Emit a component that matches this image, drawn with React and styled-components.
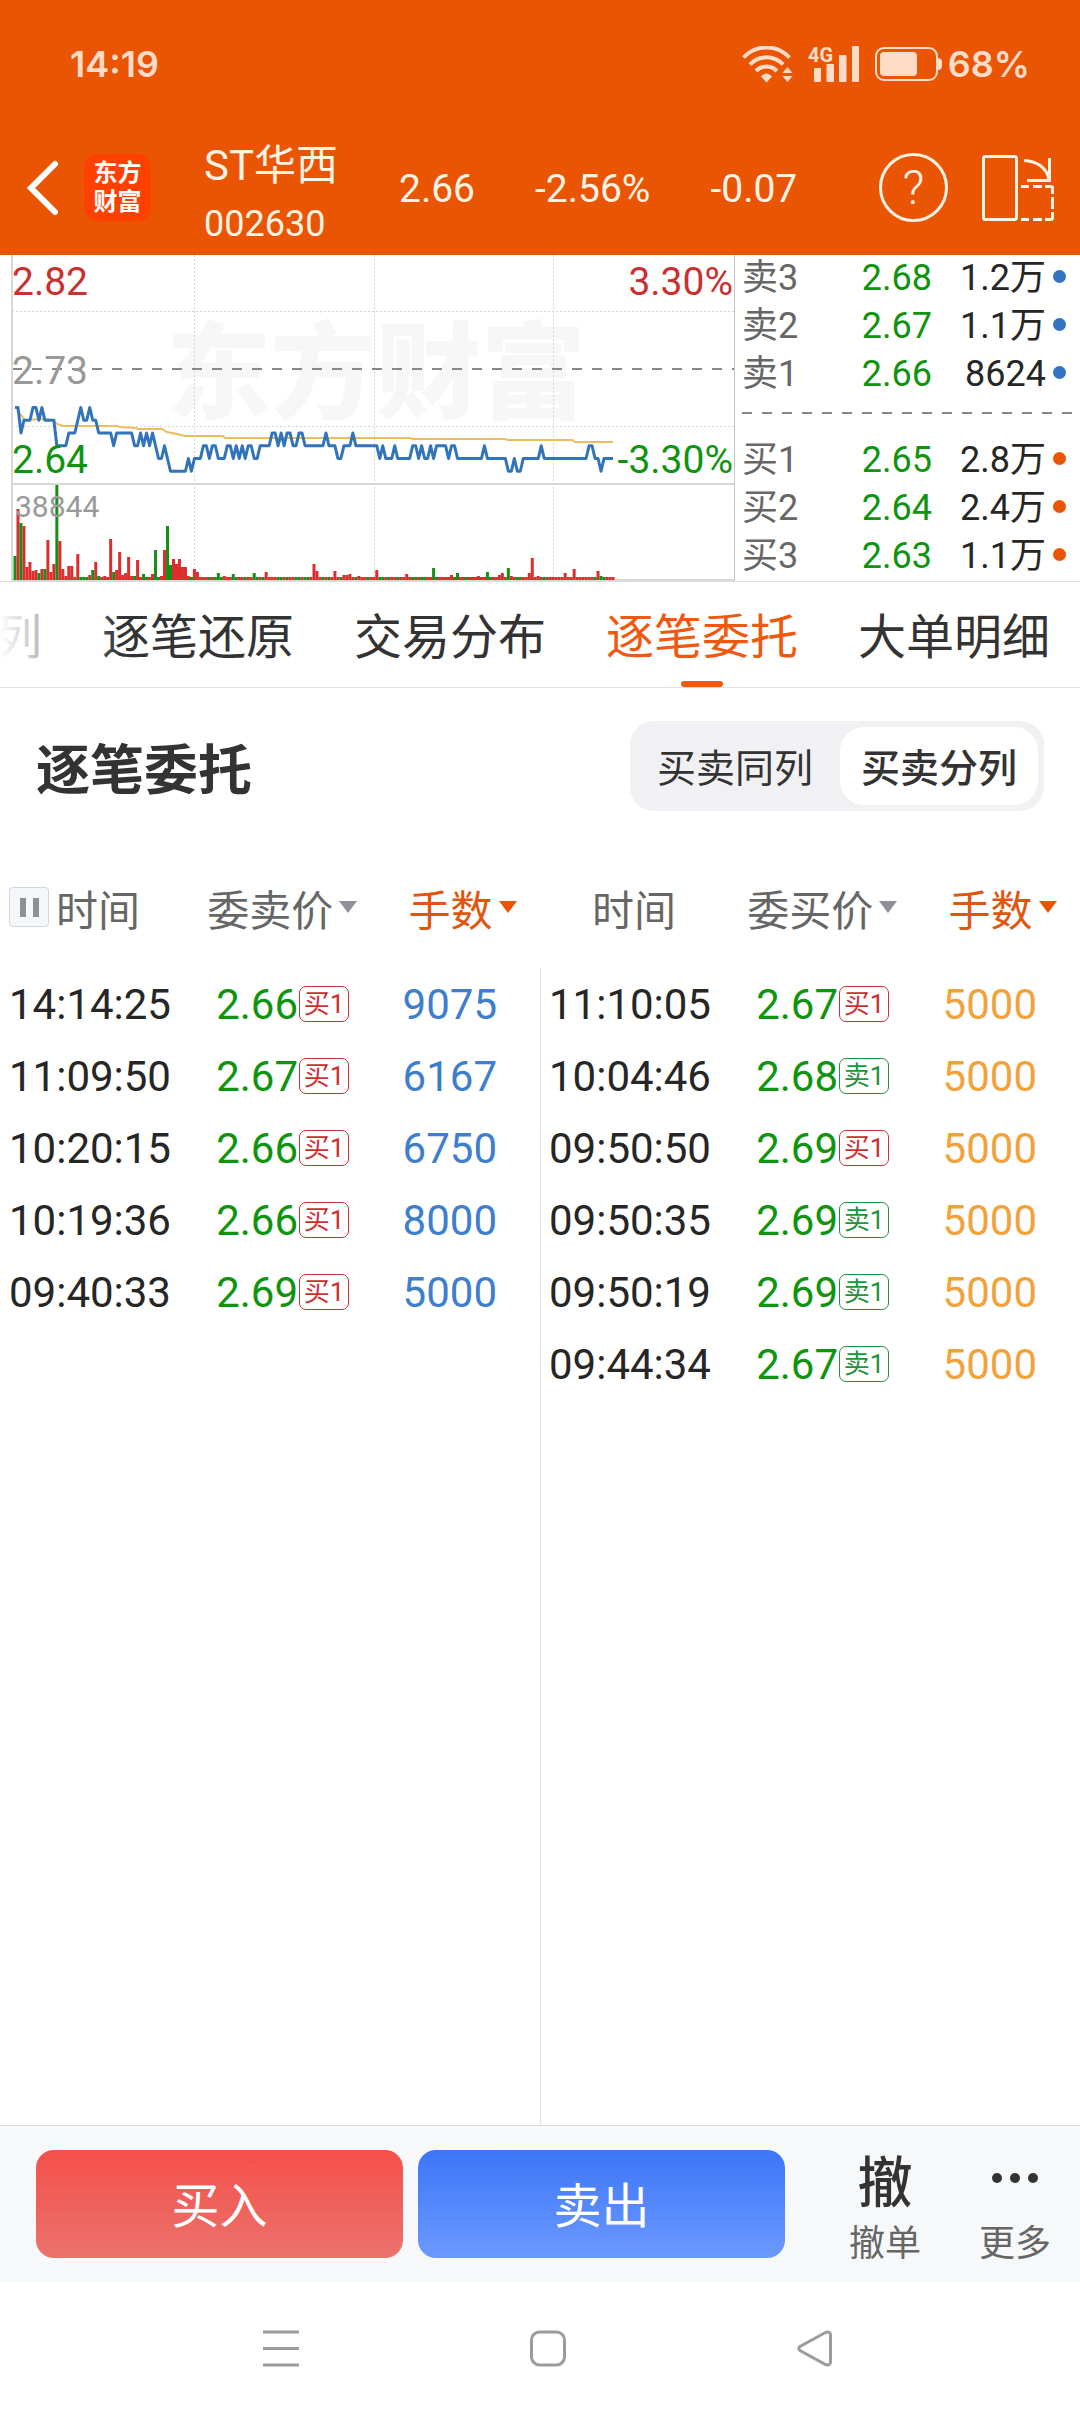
import React from 'react';
import styled, { createGlobalStyle } from 'styled-components';

const GlobalStyle = createGlobalStyle`
  *, *::before, *::after {
    box-sizing: border-box;
  }

  body {
    margin: 0;
    background: #fff;
    color: #262626;
    font-family: Roboto, 'Noto Sans CJK SC', sans-serif;
  }

  button {
    padding: 0;
    border: none;
    background: none;
    color: inherit;
    font: inherit;
    cursor: pointer;
  }

  svg {
    display: block;
  }
`;

const Page = styled.div`
  display: flex;
  flex-direction: column;
  min-height: 100vh;
`;

const Top = styled.header`
  background: #ea5504;
  color: #fff3e4;
`;

const StatusBar = styled.div`
  display: flex;
  align-items: center;
  justify-content: space-between;
  height: 120px;
  padding: 8px 50px 0 70px;
  color: #ffdcc8;
  font-family: Inter, Roboto, sans-serif;
  font-size: 36px;
  font-weight: 600;
`;

const StatusIcons = styled.div`
  display: flex;
  align-items: center;
  gap: 15px;
`;

const Battery = styled.div`
  display: flex;
  align-items: center;
  gap: 6px;
`;

const TitleBar = styled.div`
  display: flex;
  align-items: center;
  height: 135px;
  padding: 0 26px;
`;

const BackButton = styled.button`
  margin-right: 26px;
`;

const Logo = styled.div`
  display: flex;
  flex-direction: column;
  justify-content: center;
  width: 67px;
  height: 67px;
  margin-right: 53px;
  border-radius: 14px;
  background: #ff4000;
  color: #fff;
  font-size: 24px;
  font-weight: 700;
  line-height: 29px;
  text-align: center;
`;

const Stock = styled.div`
  flex: 0 0 195px;
  padding-top: 14px;
  line-height: 58px;
`;

const StockName = styled.div`
  font-size: 42px;
`;

const StockCode = styled.div`
  font-size: 36px;
`;

const Quote = styled.div`
  display: flex;
  flex: 1;
  gap: 60px;
  padding-top: 3px;
  font-size: 39px;
`;

const HelpButton = styled.button`
  width: 69px;
  height: 69px;
  margin-right: 34px;
  border: 3px solid #fff3e4;
  border-radius: 50%;
  font-size: 48px;
  font-weight: 300;
  line-height: 62px;
`;

const Market = styled.section`
  display: grid;
  grid-template-columns: 735fr 345fr;
  border-bottom: 1px solid #dcdcdc;
`;

const Chart = styled.svg`
  width: 100%;
  height: auto;
  font-size: 39px;
`;

const Book = styled.div`
  display: flex;
  flex-direction: column;
  padding: 0 8px 0 7px;
  font-size: 36px;
`;

const BookSide = styled.div`
  line-height: 46px;
`;

const BookRow = styled.div`
  display: grid;
  grid-template-columns: 80px 1fr 114px 26px;
  height: 48px;
`;

const BookLabel = styled.span`
  color: #666;
`;

const BookPrice = styled.span`
  color: #0f940f;
  text-align: right;
`;

const BookVolume = styled.span`
  text-align: right;
`;

const Dot = styled.i`
  align-self: center;
  justify-self: end;
  width: 13px;
  height: 13px;
  margin: 0 6px 6px 0;
  border-radius: 50%;
  background: ${({ $side }) => ($side === 'sell' ? '#3274c0' : '#ea5504')};
`;

const BookDivider = styled.div`
  height: 2px;
  margin: 13px 0 auto;
  background: repeating-linear-gradient(90deg, #888 0 10px, transparent 10px 20px);
`;

const Tabs = styled.nav`
  position: relative;
  display: flex;
  justify-content: flex-end;
  gap: 60px;
  height: 106px;
  padding-right: 30px;
  border-bottom: 1px solid #e2e2e4;
  overflow: hidden;

  &::before {
    content: '';
    position: absolute;
    inset: 0 auto 0 0;
    z-index: 1;
    width: 120px;
    background: linear-gradient(90deg, #fff, rgba(255, 255, 255, 0));
    pointer-events: none;
  }
`;

const Tab = styled.button`
  position: relative;
  flex: none;
  padding-bottom: 4px;
  color: ${({ $active }) => ($active ? '#f0590d' : '#333')};
  font-size: 48px;

  &::after {
    content: '';
    display: ${({ $active }) => ($active ? 'block' : 'none')};
    position: absolute;
    bottom: 0;
    left: calc(50% - 21px);
    width: 42px;
    height: 6px;
    border-radius: 3px;
    background: #f0590d;
  }
`;

const Heading = styled.div`
  display: flex;
  align-items: center;
  justify-content: space-between;
  padding: 33px 36px 40px;
`;

const Title = styled.h1`
  margin: 0;
  color: #333;
  font-size: 54px;
  font-weight: 700;
`;

const Segment = styled.div`
  display: flex;
  gap: 6px;
  padding: 6px;
  border-radius: 24px;
  background: #f1f1f4;
`;

const SegmentButton = styled.button`
  height: 78px;
  padding: 0 21px 2px;
  border-radius: 24px;
  background: ${({ $active }) => ($active ? '#fff' : 'transparent')};
  color: #333;
  font-size: 39px;
  font-weight: ${({ $active }) => ($active ? 500 : 400)};
`;

const Orders = styled.main`
  display: grid;
  grid-template-columns: 1fr 1fr;
  flex: 1;
`;

const OrderSide = styled.section`
  background: ${({ $divided }) =>
    $divided ? 'linear-gradient(#e3e3e5, #e3e3e5) left bottom / 1px calc(100% - 117px) no-repeat' : 'none'};
`;

const OrderTable = styled.table`
  width: 100%;
  border-collapse: collapse;
  table-layout: fixed;
  font-size: 42px;

  th,
  td {
    padding: 0;
    font-weight: 400;
    text-align: left;
    white-space: nowrap;
  }

  th {
    height: 117px;
    padding-bottom: 5px;
    color: #666;
  }

  td {
    height: 72px;
  }

  th:nth-child(1) {
    width: 38%;
  }

  th:nth-child(2) {
    width: 36%;
    padding-left: 2px;
  }

  th:nth-child(3) {
    width: 26%;
    padding-left: 9px;
  }

  td:nth-child(1) {
    padding-left: 9px;
  }

  td:nth-child(2) {
    padding-left: 11px;
  }

  td:nth-child(3) {
    padding-left: 3px;
  }
`;

const TimeHead = styled.div`
  display: flex;
  align-items: center;
  gap: 7px;
  padding-left: ${({ $indent }) => $indent}px;
`;

const PauseButton = styled.button`
  display: flex;
  align-items: center;
  justify-content: center;
  gap: 7px;
  width: 40px;
  height: 40px;
  border: 1px solid #d3d6dd;
  border-radius: 4px;
  background: #f6f7fb;

  &::before,
  &::after {
    content: '';
    width: 6px;
    height: 19px;
    background: #909098;
  }
`;

const SortButton = styled.button`
  display: flex;
  align-items: center;
  gap: 6px;
  color: ${({ $active }) => ($active ? '#e0560c' : '#666')};

  &::after {
    content: '';
    border: 9px solid transparent;
    border-top: 12px solid ${({ $active }) => ($active ? '#ea5504' : '#909098')};
    border-bottom: 0;
  }
`;

const Price = styled.div`
  display: flex;
  align-items: center;
  gap: 1px;
  color: #0f940f;
`;

const Badge = styled.span`
  width: 50px;
  height: 36px;
  border: 1px solid currentColor;
  border-radius: 7px;
  color: ${({ $side }) => ($side === '买1' ? '#c93030' : '#23913a')};
  font-size: 26px;
  line-height: 34px;
  text-align: center;
`;

const Lots = styled.td`
  color: ${({ $side }) => ($side === 'sell' ? '#3e7ecb' : '#f0a33c')};
`;

const TradeBar = styled.footer`
  display: flex;
  align-items: center;
  height: 157px;
  padding-left: 36px;
  border-top: 1px solid #d6d8da;
  background: #f7f8fa;
`;

const TradeButtons = styled.div`
  display: flex;
  flex: 1;
  gap: 15px;
  margin-right: 35px;
`;

const TradeButton = styled.button`
  flex: 1;
  height: 108px;
  padding-bottom: 4px;
  border-radius: 18px;
  background: ${({ $side }) =>
    $side === 'buy' ? 'linear-gradient(#f5504a, #eb726c)' : 'linear-gradient(#3b76f8, #6c99ff)'};
  color: #fff;
  font-size: 48px;
`;

const Action = styled.button`
  display: flex;
  flex-direction: column;
  align-items: center;
  width: 130px;
  color: #666;
  font-size: 36px;
`;

const ActionIcon = styled.span`
  display: flex;
  align-items: center;
  height: 72px;
  color: #333;
  font-size: 55px;
  font-weight: 500;
`;

const SystemNav = styled.nav`
  display: grid;
  grid-template-columns: repeat(3, 1fr);
  height: 132px;
  padding: 0 132px 0 147px;
`;

const SystemButton = styled.button`
  display: flex;
  align-items: center;
  justify-content: center;
`;

// one digit per minute: cents below 2.70
const PRICE_STEPS = [
  '002111001011113333222101101122',
  '222322222233232323443455555545',
  '444334334443343434334433332232',
  '322332233333332333443332333333',
  '334344434444433434434333343344',
  '444444434444444554554444443444',
  '444444444444334454444',
].join('');

const AVERAGE =
  '17,155 25,165 43,164 53,165 57,169 63,171 117,171 120,172 136,173 138,174 162,174 167,177 177,179 185,181 223,181 225,183 410,183 413,184 505,184 508,185 572,185 575,187 613,187';

// bar heights of the first hour; negative values are falling minutes
const OPENING_VOLUME = [
  -24, 71, -57, 54, 13, 18, 9, 10, -7, 11, -11, 40, 8, 16, -95, 39, 11, 4, 14, 14,
  3, 26, -3, -3, -3, 5, -10, 18, -4, 3, 4, 3, 41, -8, 10, 28, 5, 7, 23, 4,
  -4, 20, 3, -6, -3, 3, 6, -30, -3, 4, 30, -54, -15, 21, 16, 21, 13, 13, 4, -3,
  11, 8,
];

const LATER_VOLUME = {
  68: -7, 70: 4, 73: -6, 80: -7, 84: 8, 100: 16, 101: 9, 107: 9, 110: 5, 111: 5,
  112: 6, 115: 4, 121: 10, 131: 6, 140: -12, 146: 5, 148: -7, 155: 4, 158: -8,
  162: 5, 163: 7, 165: -12, 166: 4, 172: 7, 173: 22, 175: 4, 184: 7, 187: 11,
  195: 9, 196: -4,
};

const FALLING = [
  65, 67, 69, 74, 77, 81, 83, 88, 89, 91, 94, 95, 97, 98, 103, 105, 109, 114, 118,
  122, 123, 125, 128, 133, 134, 136, 137, 141, 147, 151, 159, 168, 169, 177, 194, 197,
];

const minuteX = (minute) => 15 + minute * 2.99;

const volumeAt = (minute) =>
  OPENING_VOLUME[minute] ?? LATER_VOLUME[minute] ?? (FALLING.includes(minute) ? -3 : 3);

const pricePoints = [...PRICE_STEPS].map((step, i) => `${minuteX(i)},${152.5 + step * 12.75}`).join(' ');

const book = {
  sell: [
    ['卖3', '2.68', '1.2万'],
    ['卖2', '2.67', '1.1万'],
    ['卖1', '2.66', '8624'],
  ],
  buy: [
    ['买1', '2.65', '2.8万'],
    ['买2', '2.64', '2.4万'],
    ['买3', '2.63', '1.1万'],
  ],
};

const sellOrders = [
  ['14:14:25', '2.66', '买1', '9075'],
  ['11:09:50', '2.67', '买1', '6167'],
  ['10:20:15', '2.66', '买1', '6750'],
  ['10:19:36', '2.66', '买1', '8000'],
  ['09:40:33', '2.69', '买1', '5000'],
];

const buyOrders = [
  ['11:10:05', '2.67', '买1', '5000'],
  ['10:04:46', '2.68', '卖1', '5000'],
  ['09:50:50', '2.69', '买1', '5000'],
  ['09:50:35', '2.69', '卖1', '5000'],
  ['09:50:19', '2.69', '卖1', '5000'],
  ['09:44:34', '2.67', '卖1', '5000'],
];

const tabs = ['列', '逐笔还原', '交易分布', '逐笔委托', '大单明细'];

const WifiIcon = () => (
  <svg width="51" height="37" viewBox="0 0 51 37" fill="none" stroke="currentColor" strokeWidth="4">
    <path d="M1.5 11.5A31.5 31.5 0 0 1 47.5 11.5" />
    <path d="M8 18.5A22.5 22.5 0 0 1 41 18.5" />
    <path d="M14 25A14.5 14.5 0 0 1 35 25" />
    <path d="M19 30.5Q24.5 24.5 30 30.5L24.5 36.5z" fill="currentColor" stroke="none" />
    <path d="M40.5 27L45.5 21L50.5 27zM40.5 30L45.5 36L50.5 30z" fill="currentColor" stroke="none" />
  </svg>
);

const SignalIcon = () => (
  <svg width="52" height="38" viewBox="0 0 52 38" fill="currentColor" overflow="visible">
    <text x="0" y="17" fontFamily="Roboto, sans-serif" fontSize="20" fontWeight="700">
      4G
    </text>
    <rect x="6" y="23" width="7" height="14" rx="1" />
    <rect x="18.5" y="19" width="7.5" height="18" rx="1" />
    <rect x="31" y="10" width="7.5" height="27" rx="1" />
    <rect x="44" y="1" width="7" height="36" rx="1" />
  </svg>
);

const BatteryIcon = () => (
  <svg width="67" height="34" viewBox="0 0 67 34" fill="none" stroke="currentColor" strokeWidth="2">
    <rect x="1" y="1" width="61" height="32" rx="8" />
    <rect x="5" y="5" width="37" height="24" rx="4" fill="currentColor" stroke="none" />
    <path d="M63 11h1q3 1 3 4v4q0 3-3 4h-1z" fill="currentColor" stroke="none" />
  </svg>
);

const LandscapeIcon = () => (
  <svg width="72" height="66" viewBox="0 0 72 66" fill="none" stroke="currentColor" strokeWidth="3">
    <rect x="1.5" y="1.5" width="33" height="63" rx="2" />
    <path d="M42 5.5C54 6 65 12 67 25" />
    <path d="M67.5 3V27M45 25.5H69" />
    <path d="M39 31.5H47M51 31.5H60M63 31.5H69Q70.5 31.5 70.5 33V39M70.5 42V54M70.5 57V63Q70.5 64.5 69 64.5H63M60 64.5H51M47 64.5H39" />
  </svg>
);

const PriceChart = () => (
  <Chart viewBox="0 0 735 326" role="img" aria-label="分时走势">
    <text x="166" y="155" fontSize="105" fontWeight="900" fill="#f7f7f7">
      东方财富
    </text>
    <g stroke="#d6d6d6" strokeDasharray="2 2">
      <path d="M194.5 0V325M374.5 0V325M553.5 0V325M12 56.5H734M12 171.5H734" />
    </g>
    <path d="M12 114H734" stroke="#888" strokeWidth="2" strokeDasharray="10 10" />
    <path d="M12 0V326M12 229H734M12 325H734" stroke="#d8d8d8" strokeWidth="2" />
    <path d="M734.5 0V326" stroke="#c8c8c8" />
    <polyline points={AVERAGE} fill="none" stroke="#ecbd5f" strokeWidth="2" />
    <polyline points={pricePoints} fill="none" stroke="#3274bb" strokeWidth="3" strokeLinejoin="round" />
    {Array.from({ length: 201 }, (_, minute) => {
      const volume = volumeAt(minute);
      return (
        <rect
          key={minute}
          x={minuteX(minute) - 1.5}
          y={325 - Math.abs(volume)}
          width="3"
          height={Math.abs(volume)}
          fill={volume < 0 ? '#158f15' : '#dc2c2c'}
        />
      );
    })}
    <g fill="#999">
      <text x="12" y="129">2.73</text>
      <text x="15" y="262" fontSize="30">38844</text>
    </g>
    <g fill="#c93030">
      <text x="12" y="40">2.82</text>
      <text x="733" y="40" textAnchor="end">3.30%</text>
    </g>
    <g fill="#0f940f">
      <text x="12" y="218">2.64</text>
      <text x="733" y="218" textAnchor="end">-3.30%</text>
    </g>
  </Chart>
);

const BookLevels = ({ side }) => (
  <BookSide>
    {book[side].map(([label, price, volume]) => (
      <BookRow key={label}>
        <BookLabel>{label}</BookLabel>
        <BookPrice>{price}</BookPrice>
        <BookVolume>{volume}</BookVolume>
        <Dot $side={side} />
      </BookRow>
    ))}
  </BookSide>
);

const OrderList = ({ side, priceLabel, orders }) => (
  <OrderSide $divided={side === 'buy'}>
    <OrderTable>
      <thead>
        <tr>
          <th>
            <TimeHead $indent={side === 'sell' ? 9 : 52}>
              {side === 'sell' && <PauseButton aria-label="暂停" />}
              时间
            </TimeHead>
          </th>
          <th>
            <SortButton>{priceLabel}</SortButton>
          </th>
          <th>
            <SortButton $active>手数</SortButton>
          </th>
        </tr>
      </thead>
      <tbody>
        {orders.map(([time, price, level, lots]) => (
          <tr key={time}>
            <td>{time}</td>
            <td>
              <Price>
                {price}
                <Badge $side={level}>{level}</Badge>
              </Price>
            </td>
            <Lots $side={side}>{lots}</Lots>
          </tr>
        ))}
      </tbody>
    </OrderTable>
  </OrderSide>
);

const App = () => {
  return (
    <Page>
      <GlobalStyle />
      <Top>
        <StatusBar>
          <span>14:19</span>
          <StatusIcons>
            <WifiIcon />
            <SignalIcon />
            <Battery>
              <BatteryIcon />
              68%
            </Battery>
          </StatusIcons>
        </StatusBar>
        <TitleBar>
          <BackButton aria-label="返回">
            <svg width="32" height="56" viewBox="0 0 32 56" fill="none" stroke="#fff" strokeWidth="6">
              <path d="M29 4L5 28L29 52" strokeLinecap="round" />
            </svg>
          </BackButton>
          <Logo>
            <span>东方</span>
            <span>财富</span>
          </Logo>
          <Stock>
            <StockName>ST华西</StockName>
            <StockCode>002630</StockCode>
          </Stock>
          <Quote>
            <span>2.66</span>
            <span>-2.56%</span>
            <span>-0.07</span>
          </Quote>
          <HelpButton aria-label="帮助">?</HelpButton>
          <button aria-label="横屏">
            <LandscapeIcon />
          </button>
        </TitleBar>
      </Top>

      <Market>
        <PriceChart />
        <Book>
          <BookLevels side="sell" />
          <BookDivider />
          <BookLevels side="buy" />
        </Book>
      </Market>

      <Tabs>
        {tabs.map((tab) => (
          <Tab key={tab} $active={tab === '逐笔委托'}>
            {tab}
          </Tab>
        ))}
      </Tabs>

      <Heading>
        <Title>逐笔委托</Title>
        <Segment>
          <SegmentButton>买卖同列</SegmentButton>
          <SegmentButton $active>买卖分列</SegmentButton>
        </Segment>
      </Heading>

      <Orders>
        <OrderList side="sell" priceLabel="委卖价" orders={sellOrders} />
        <OrderList side="buy" priceLabel="委买价" orders={buyOrders} />
      </Orders>

      <TradeBar>
        <TradeButtons>
          <TradeButton $side="buy">买入</TradeButton>
          <TradeButton $side="sell">卖出</TradeButton>
        </TradeButtons>
        <Action>
          <ActionIcon>撤</ActionIcon>
          撤单
        </Action>
        <Action>
          <ActionIcon>
            <svg width="46" height="10" viewBox="0 0 46 10" fill="currentColor">
              <circle cx="5" cy="5" r="5" />
              <circle cx="23" cy="5" r="5" />
              <circle cx="41" cy="5" r="5" />
            </svg>
          </ActionIcon>
          更多
        </Action>
      </TradeBar>

      <SystemNav>
        <SystemButton aria-label="最近任务">
          <svg width="36" height="37" viewBox="0 0 36 37" stroke="#9c9c9c" strokeWidth="3">
            <path d="M0 2H36M0 18.5H36M0 35H36" />
          </svg>
        </SystemButton>
        <SystemButton aria-label="主屏幕">
          <svg width="36" height="37" viewBox="0 0 36 37" fill="none" stroke="#9c9c9c" strokeWidth="3">
            <rect x="1.5" y="2" width="33" height="33" rx="8" />
          </svg>
        </SystemButton>
        <SystemButton aria-label="返回上一级">
          <svg width="35" height="37" viewBox="0 0 35 37" fill="none" stroke="#9c9c9c" strokeWidth="3">
            <path d="M28.5 2.5L3 16.5Q0.5 18.5 3 20.5L28.5 34.5Q33.5 36 33.5 32V5Q33.5 1 28.5 2.5z" />
          </svg>
        </SystemButton>
      </SystemNav>
    </Page>
  );
};

export default App;
